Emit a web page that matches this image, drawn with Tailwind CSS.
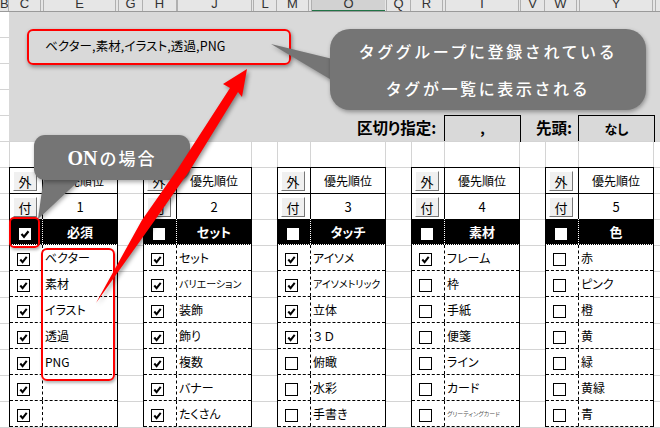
<!DOCTYPE html>
<html lang="ja">
<head>
    <meta charset="UTF-8">
    <meta name="viewport" content="width=device-width, initial-scale=1.0">
    <title>タググループ</title>
    <script src="https://cdn.jsdelivr.net/npm/@tailwindcss/browser@4"></script>
</head>
<body class="relative w-[660px] h-[428px] overflow-hidden bg-white text-black font-['Noto_Sans_CJK_JP',sans-serif] [font-feature-settings:'palt']">
    <!-- column letters -->
    <div id="cols" class="flex h-[12px] overflow-hidden bg-[#e6e6e6] border-b border-[#9a9a9a] font-['Liberation_Sans',sans-serif] text-[13px] leading-[7px] text-[#333]"></div>

    <!-- sheet -->
    <div class="h-[416px] bg-[repeating-linear-gradient(to_bottom,transparent_0_25px,#d4d4d4_25px_26px)]">
        <div class="ml-[9px] h-[129px] bg-[#d9d9d9] flex items-end">
            <div class="flex items-center h-[26px] ml-[348px]">
                <span class="w-[87px] text-[15.5px] font-bold leading-none whitespace-nowrap">区切り指定:</span>
                <span class="w-[75px] h-[26px] box-content -mr-px border border-b-0 border-black flex items-center justify-center text-[14px] font-bold">,</span>
                <span class="w-[58px] text-right pr-[6px] text-[15.5px] font-bold leading-none whitespace-nowrap">先頭:</span>
                <span class="w-[75px] h-[26px] box-content border border-b-0 border-black flex items-center justify-center text-[13px] font-bold">なし</span>
            </div>
        </div>
        <div id="tables" class="flex gap-[25px] pl-[9px]"></div>
    </div>

    <!-- annotations -->
    <div class="absolute left-[45px] top-[37px] text-[12.5px] leading-[18px] whitespace-nowrap tracking-[0.1px]">ベクター,素材,イラスト,透過,PNG</div>
    <div class="absolute left-[27px] top-[29px] w-[264px] h-[36px] rounded-[6px] border-2 border-[#f00] shadow-[1px_2px_4px_rgba(0,0,0,0.4)]"></div>
    <div class="absolute left-[9px] top-[217px] w-[31px] h-[31px] rounded-[5px] border-2 border-[#f00] shadow-[1px_2px_3px_rgba(0,0,0,0.3)]"></div>
    <div class="absolute left-[41px] top-[248px] w-[74px] h-[133px] rounded-[6px] border-2 border-[#f00] shadow-[1px_2px_3px_rgba(0,0,0,0.3)]"></div>

    <svg class="absolute left-0 top-0 drop-shadow-[1px_2px_2px_rgba(0,0,0,0.35)]" width="660" height="428">
        <polygon points="271,44 345,62 345,88" fill="#757575"/>
        <polygon points="38,219 44,176 84,176" fill="#757575"/>
    </svg>

    <div class="absolute left-[330px] top-[29px] w-[316px] h-[81px] rounded-[20px] bg-[#757575] shadow-[1px_2px_4px_rgba(0,0,0,0.35)] flex flex-col items-center pt-[10px] text-white text-[16px] font-medium leading-[24px] tracking-[2.6px] [font-feature-settings:normal] gap-[13px]">
        <span>タググループに登録されている</span>
        <span>タグが一覧に表示される</span>
    </div>
    <div class="absolute left-[34px] top-[135px] w-[156px] h-[45px] rounded-[11px] bg-[#757575] shadow-[1px_2px_4px_rgba(0,0,0,0.35)] flex items-center justify-center text-white [font-feature-settings:normal]">
        <span class="font-['Liberation_Serif',serif] font-bold text-[20px] mr-[2px]">ON</span><span class="text-[17px] font-medium tracking-[2px]">の場合</span>
    </div>

    <svg class="absolute left-0 top-0 drop-shadow-[2px_2px_2px_rgba(0,0,0,0.4)]" width="660" height="428">
        <polygon points="96,303 142,220 177,170 230,88 223,84 247,69 242,97 238,92 190,170 155,220" fill="#f00"/>
    </svg>

    <script>
        const cols = [['B',9],['C',32],['',3],['E',72],['',3],['G',24],['H',34],['',1],['J',74],['',2],['L',23],['M',32],['',3],['O',73],['',2],['Q',24],['R',32],['',3],['T',73],['',2],['V',24],['W',32],['',3],['Y',73],['',3],['A',20]];
        document.getElementById('cols').innerHTML = cols.map(([name, w]) => {
            const cls = name === 'O' ? 'bg-[#d2d2d2] border-b-2 border-[#217346]' : 'border-r border-[#b0b0b0]';
            return `<div class="shrink-0 h-[12px] text-center overflow-hidden ${cls}" style="width:${w}px">${name}</div>`;
        }).join('');

        const tables = [
            { n: 1, title: '必須', on: true, rows: [['ベクター',1],['素材',1],['イラスト',1],['透過',1],['PNG',1],['',1],['',1]] },
            { n: 2, title: 'セット', on: false, rows: [['セット',1],['バリエーション',1,'text-[10px]'],['装飾',1],['飾り',1],['複数',1],['バナー',1],['たくさん',1]] },
            { n: 3, title: 'タッチ', on: false, rows: [['アイソメ',1],['アイソメトリック',1,'text-[10px]'],['立体',1],['３Ｄ',1,'text-[12px] tracking-[2px]'],['俯瞰',0],['水彩',0],['手書き',0]] },
            { n: 4, title: '素材', on: false, rows: [['フレーム',1],['枠',0],['手紙',0],['便箋',0],['ライン',0],['カード',0],['グリーティングカード',0,'text-[6px] text-[#555]']] },
            { n: 5, title: '色', on: false, rows: [['赤',0],['ピンク',0],['橙',0],['黄',0],['緑',0],['黄緑',0],['青',0]] },
        ];

        const tick = '<svg class="w-full h-full" viewBox="0 0 12 12"><polyline points="2.5,6 5,8.8 9.5,3.2" fill="none" stroke="#000" stroke-width="2.2"/></svg>';
        const button = t => `<div class="w-[33px] h-[25px] pl-[3px] pt-[3px] border-r border-black"><div class="w-[24px] h-[20px] bg-[#f0f0f0] border border-t-white border-l-white border-r-[#777] border-b-[#777] flex items-center justify-center text-[13px] leading-none">${t}</div></div>`;

        document.getElementById('tables').innerHTML = tables.map(t => `
            <section class="w-[109px] shrink-0">
                <div class="h-[26px] flex border-x border-[#d4d4d4]"><div class="w-[33px] border-r border-[#d4d4d4]"></div></div>
                <div class="border border-black border-b-0">
                    <div class="flex h-[26px] border-b border-transparent">
                        ${button('外')}
                        <div class="flex-1 flex items-center justify-center text-[12px] [font-feature-settings:normal]">優先順位</div>
                    </div>
                    <div class="flex h-[26px] border-t border-black -mt-px">
                        ${button('付')}
                        <div class="flex-1 flex items-center justify-center text-[13px]">${t.n}</div>
                    </div>
                    <div class="flex h-[26px] bg-black text-white border-b border-dotted border-white">
                        <div class="w-[33px] border-r border-dotted border-white pl-[9px] pt-[9px]">
                            <div class="w-[12px] h-[12px] bg-white">${t.on ? tick : ''}</div>
                        </div>
                        <div class="flex-1 flex items-center justify-center text-[13px] font-bold leading-none">${t.title}</div>
                    </div>
                    ${t.rows.map(([label, on, size]) => `
                    <div class="flex h-[26px] bg-white border-b border-dashed border-black">
                        <div class="w-[33px] border-r border-dashed border-black pl-[7px] pt-[8px]">
                            <div class="w-[13px] h-[13px] border border-black bg-white">${on ? tick : ''}</div>
                        </div>
                        <div class="flex-1 flex items-center pl-[2px] whitespace-nowrap overflow-hidden ${size || 'text-[12px]'}">${label}</div>
                    </div>`).join('')}
                </div>
            </section>`).join('');
    </script>
</body>
</html>
